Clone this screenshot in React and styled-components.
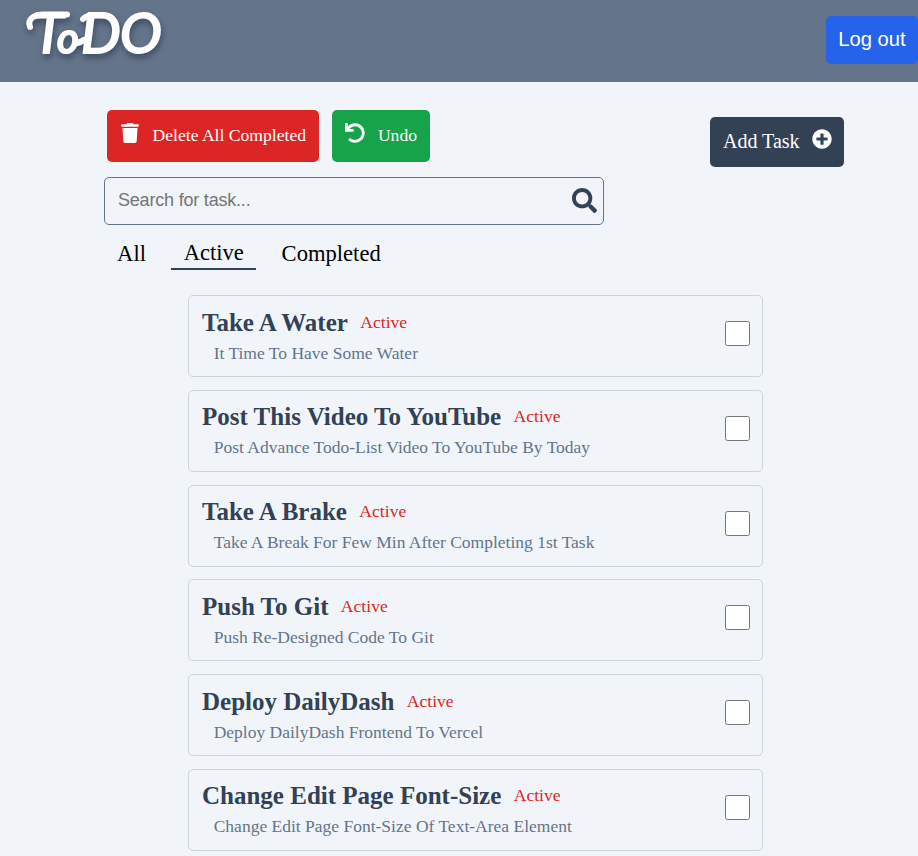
import React from "react";
import styled, { createGlobalStyle } from "styled-components";
import { FaTrash, FaUndo, FaPlusCircle, FaSearch } from "react-icons/fa";

const GlobalStyle = createGlobalStyle`
  * { box-sizing: border-box; }
  body {
    margin: 0;
    background: #f1f5f9;
    font-family: "Liberation Serif", "Times New Roman", serif;
    overflow: hidden;
  }
  button, input { font: inherit; margin: 0; }
`;

const Page = styled.div`
  width: 100%;
  height: 856px;
  overflow: hidden;
`;

const Header = styled.header`
  height: 82px;
  display: flex;
  justify-content: space-between;
  align-items: flex-start;
  background: #64748b;
`;

const Logo = styled.svg`
  display: block;
  overflow: visible;
  filter: drop-shadow(1px 4px 3px rgba(30, 41, 59, 0.55));
  text {
    fill: #fff;
    stroke: #fff;
    stroke-width: 2.2px;
    stroke-linejoin: round;
    font: italic 400 56px Lato, sans-serif;
  }
  .small { font-size: 42px; }
  path {
    fill: none;
    stroke: #fff;
    stroke-width: 6px;
    stroke-linecap: round;
  }
`;

const LogoutButton = styled.button`
  width: 92px;
  height: 48px;
  margin-top: 16px;
  padding: 0 0 1px;
  border: 0;
  border-radius: 5px;
  background: #2563eb;
  color: #fff;
  font: 20.2px/45px "Liberation Sans", Arial, sans-serif;
`;

const Toolbar = styled.div`
  display: flex;
  justify-content: space-between;
  padding: 28px 74px 0 107px;
  height: 95px;
`;

const ButtonGroup = styled.div`
  display: flex;
  gap: 13px;
`;

const tones = { danger: "#dc2626", success: "#16a34a", dark: "#334155" };

const ActionButton = styled.button`
  display: flex;
  align-items: center;
  justify-content: space-between;
  width: ${(p) => p.$width}px;
  height: ${(p) => (p.$large ? 50 : 52)}px;
  margin-top: ${(p) => (p.$large ? 7 : 0)}px;
  padding: 0 ${(p) => (p.$large ? 12 : 13)}px 2px 13px;
  border: 0;
  border-radius: 5px;
  background: ${(p) => tones[p.$tone]};
  color: #fff;
  font-size: ${(p) => (p.$large ? 20 : 17.6)}px;
  white-space: nowrap;
  svg { display: block; margin-bottom: 4px; }
`;

const SearchBox = styled.label`
  display: flex;
  align-items: center;
  width: 500px;
  height: 48px;
  margin-left: 104px;
  padding: 0 6px 2px 13px;
  border: 1px solid #64748b;
  border-radius: 5px;
  color: #334155;
`;

const SearchInput = styled.input`
  flex: 1;
  min-width: 0;
  padding: 0;
  border: 0;
  outline: 0;
  background: transparent;
  font: 18px "Liberation Sans", Arial, sans-serif;
  letter-spacing: -0.2px;
  &::placeholder { color: #757575; }
`;

const Tabs = styled.nav`
  display: flex;
  align-items: flex-start;
  height: 70px;
  padding: 12px 0 0 104.5px;
`;

const Tab = styled.button`
  height: 33px;
  padding: 1px 12.6px;
  margin-right: ${(p) => p.$gap || 0}px;
  border: 0;
  border-bottom: ${(p) => (p.$active ? "2px solid #334155" : "0")};
  background: transparent;
  color: #000;
  font-size: 22.6px;
  line-height: 29px;
`;

const TaskList = styled.ul`
  display: flex;
  flex-direction: column;
  gap: 12.8px;
  width: 575px;
  margin: 0 0 0 188px;
  padding: 0;
  list-style: none;
`;

const TaskCard = styled.li`
  display: flex;
  align-items: center;
  justify-content: space-between;
  height: 82px;
  flex: none;
  padding: 0 12px 0 13px;
  border: 1px solid #cbd5e1;
  border-radius: 5px;
`;

const TaskHeading = styled.div`
  display: flex;
  align-items: flex-start;
  gap: 12.4px;
`;

const TaskTitle = styled.h2`
  margin: 0;
  color: #334155;
  font-size: 25px;
  line-height: 31px;
`;

const Status = styled.span`
  color: #dc2626;
  font-size: 17.6px;
  line-height: 31px;
`;

const Description = styled.p`
  margin: 2px 0 0 11.7px;
  color: #64748b;
  font-size: 17.5px;
  line-height: 26px;
`;

const Checkbox = styled.input`
  width: 25px;
  height: 25px;
  margin: 0 0 5px;
`;

const tasks = [
  ["Take A Water", "It Time To Have Some Water"],
  ["Post This Video To YouTube", "Post Advance Todo-List Video To YouTube By Today"],
  ["Take A Brake", "Take A Break For Few Min After Completing 1st Task"],
  ["Push To Git", "Push Re-Designed Code To Git"],
  ["Deploy DailyDash", "Deploy DailyDash Frontend To Vercel"],
  ["Change Edit Page Font-Size", "Change Edit Page Font-Size Of Text-Area Element"],
];

export default function App() {
  return (
    <Page>
      <GlobalStyle />
      <Header>
        <Logo width="180" height="82" role="img" aria-label="ToDO">
          <text y="53">
            <tspan x="33">T</tspan>
            <tspan x="57" className="small">o</tspan>
            <tspan x="81">D</tspan>
            <tspan x="120">O</tspan>
          </text>
          <path d="M30 27C27 19 34 14.5 44 14.5H67M75 43Q80 43 84 40M83 19Q87 15 95 15" />
        </Logo>
        <LogoutButton>Log out</LogoutButton>
      </Header>
      <Toolbar>
        <ButtonGroup>
          <ActionButton $tone="danger" $width={212}>
            <FaTrash size={20} />
            Delete All Completed
          </ActionButton>
          <ActionButton $tone="success" $width={98}>
            <FaUndo size={20} />
            Undo
          </ActionButton>
        </ButtonGroup>
        <ActionButton $tone="dark" $width={134} $large>
          Add Task
          <FaPlusCircle size={20} />
        </ActionButton>
      </Toolbar>
      <SearchBox>
        <SearchInput placeholder="Search for task..." />
        <FaSearch size={25} />
      </SearchBox>
      <Tabs>
        <Tab $gap={12.5}>All</Tab>
        <Tab $active $gap={12.5}>Active</Tab>
        <Tab>Completed</Tab>
      </Tabs>
      <TaskList>
        {tasks.map(([title, description]) => (
          <TaskCard key={title}>
            <div>
              <TaskHeading>
                <TaskTitle>{title}</TaskTitle>
                <Status>Active</Status>
              </TaskHeading>
              <Description>{description}</Description>
            </div>
            <Checkbox type="checkbox" aria-label={title} />
          </TaskCard>
        ))}
      </TaskList>
    </Page>
  );
}
